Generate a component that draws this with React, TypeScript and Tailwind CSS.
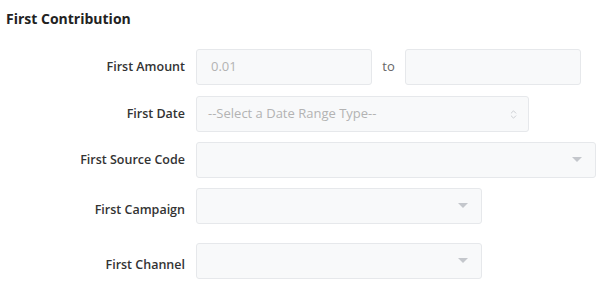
import { ChevronsUpDown } from 'lucide-react'

const Caret = () => (
  <svg width="10" height="6" viewBox="0 0 10 6" className="text-[#c4c7cc]">
    <path d="M0 0 L10 0 L5 5 Z" fill="currentColor" />
  </svg>
)

const Label = ({ children, low }: { children: string; low?: boolean }) => (
  <div className={`w-[185px] shrink-0 text-right text-[12.5px] font-semibold text-[#333] ${low ? 'pt-[9px]' : ''}`}>
    {children}
  </div>
)

const boxCls = 'h-[36px] rounded-[3px] border border-[#e6e8eb] bg-[#f8f9fa] flex items-center'

const App = () => {
  return (
    <div className="w-[600px] h-[296px] bg-white font-['Open_Sans',sans-serif]">
      <h2 className="pl-[6px] pt-[9px] text-[14px] font-bold text-[#222] leading-[20px]">First Contribution</h2>

      <div className="mt-[20px] flex items-center">
        <Label>First Amount</Label>
        <div className={`${boxCls} ml-[11px] w-[176px] pl-[14px] text-[13px] text-[#b3b3b3]`}>0.01</div>
        <span className="w-[33px] text-center text-[13px] text-[#666]">to</span>
        <div className={`${boxCls} w-[176px]`} />
      </div>

      <div className="mt-[11px] flex items-center">
        <Label>First Date</Label>
        <div className={`${boxCls} ml-[11px] w-[333px] h-[35px] justify-between pl-[11px] pr-[9px] text-[13px] text-[#b3b3b3]`}>
          <span>--Select a Date Range Type--</span>
          <ChevronsUpDown size={11} strokeWidth={1.5} className="text-[#b8bbc0]" />
        </div>
      </div>

      <div className="mt-[10px] flex items-center">
        <Label>First Source Code</Label>
        <div className={`${boxCls} ml-[11px] w-[400px] justify-end pr-[13px]`}>
          <Caret />
        </div>
      </div>

      <div className="mt-[10px] flex items-center">
        <Label low>First Campaign</Label>
        <div className={`${boxCls} ml-[11px] w-[286px] justify-end pr-[13px]`}>
          <Caret />
        </div>
      </div>

      <div className="mt-[19px] flex items-center">
        <Label low>First Channel</Label>
        <div className={`${boxCls} ml-[11px] w-[286px] h-[35px] justify-end pr-[13px]`}>
          <Caret />
        </div>
      </div>
    </div>
  )
}

export default App
